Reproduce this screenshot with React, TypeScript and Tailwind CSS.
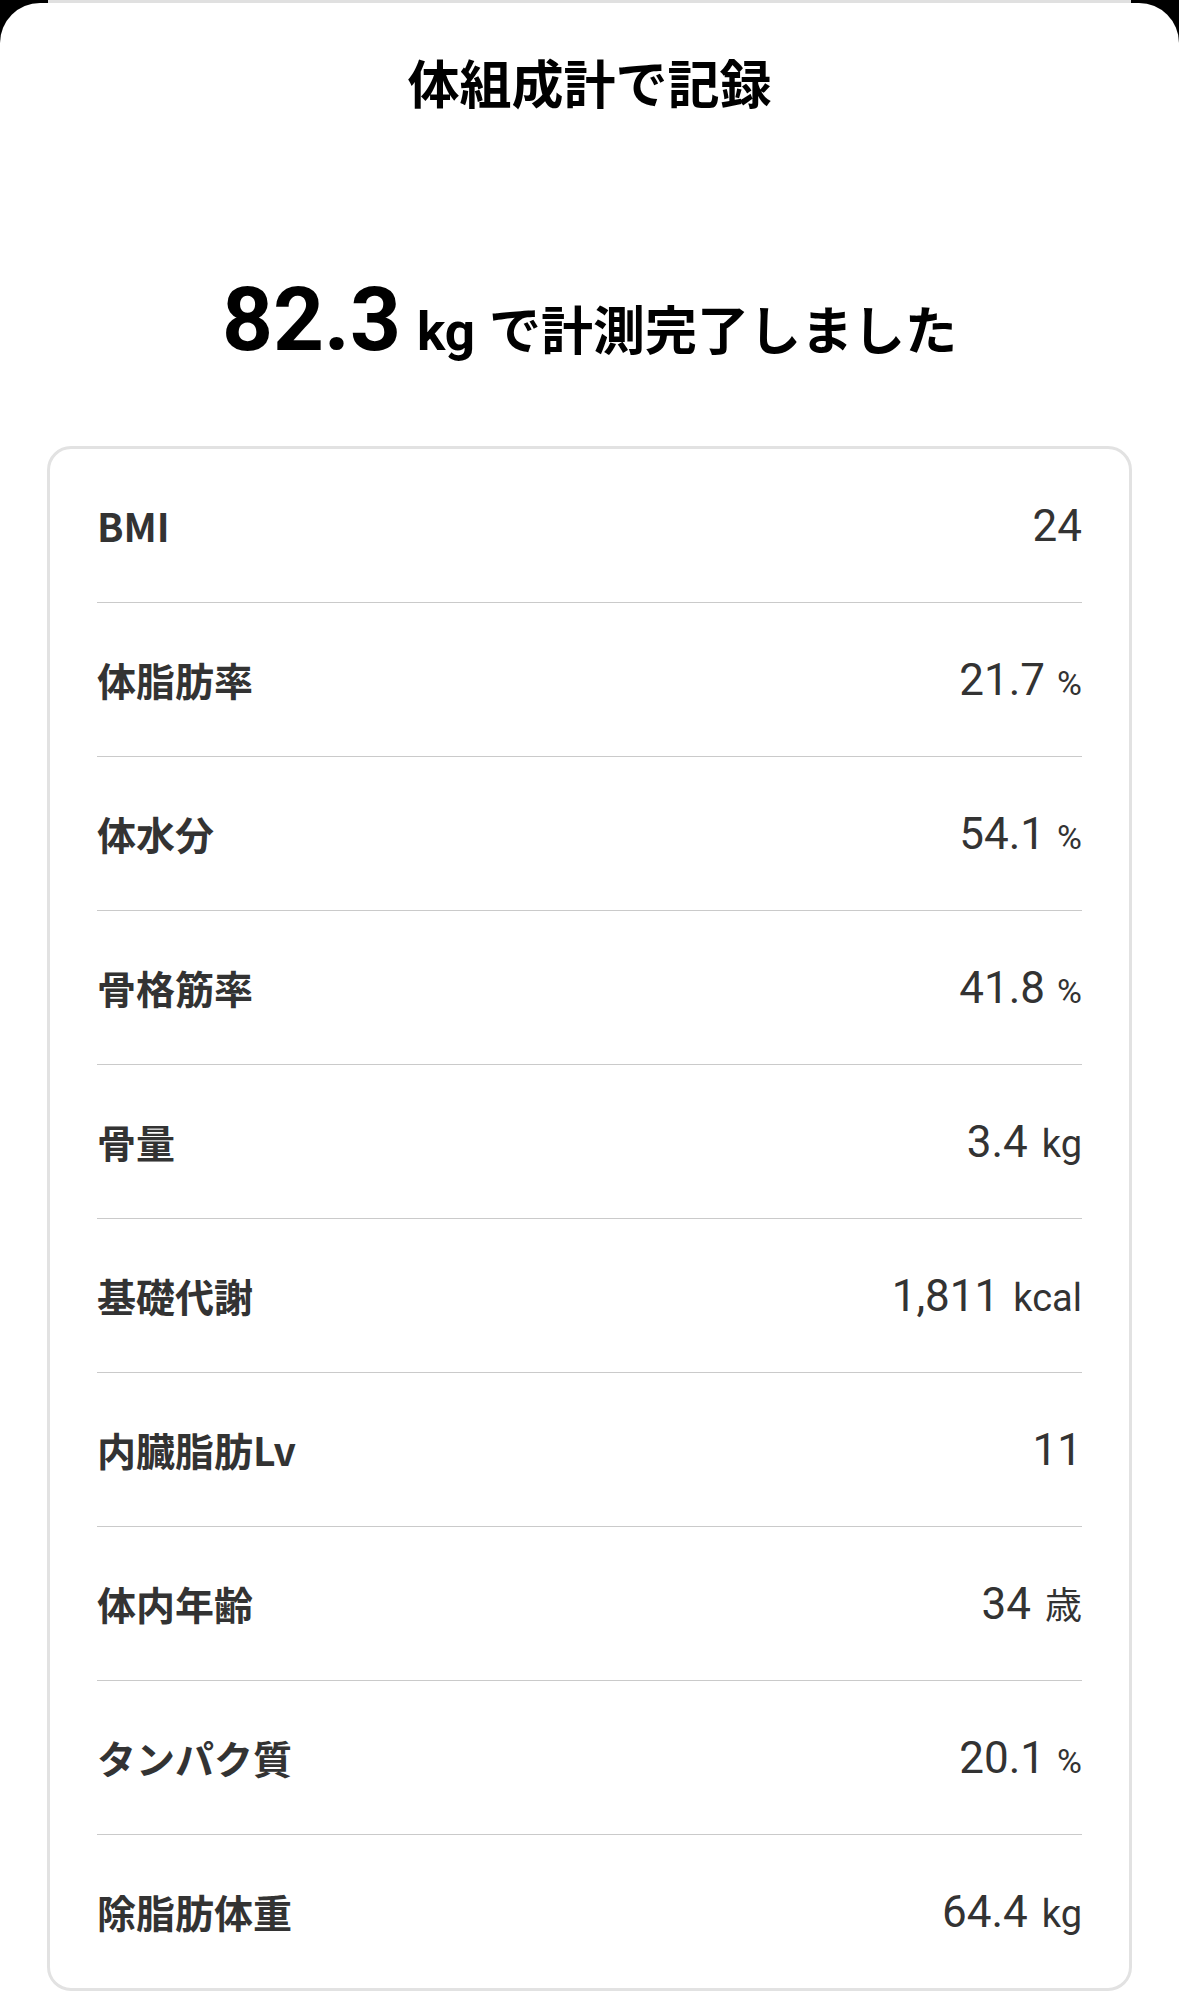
const rows: { label: string; value: string; unit?: string; unitKind?: "pct" | "latin" | "cjk" }[] = [
  { label: "BMI", value: "24" },
  { label: "体脂肪率", value: "21.7", unit: "%", unitKind: "pct" },
  { label: "体水分", value: "54.1", unit: "%", unitKind: "pct" },
  { label: "骨格筋率", value: "41.8", unit: "%", unitKind: "pct" },
  { label: "骨量", value: "3.4", unit: "kg", unitKind: "latin" },
  { label: "基礎代謝", value: "1,811", unit: "kcal", unitKind: "latin" },
  { label: "内臓脂肪Lv", value: "11" },
  { label: "体内年齢", value: "34", unit: "歳", unitKind: "cjk" },
  { label: "タンパク質", value: "20.1", unit: "%", unitKind: "pct" },
  { label: "除脂肪体重", value: "64.4", unit: "kg", unitKind: "latin" },
];

function Unit({ unit, kind }: { unit: string; kind?: string }) {
  if (kind === "pct") {
    return <span className="ml-[12px] text-[34px]">{unit}</span>;
  }
  if (kind === "cjk") {
    return (
      <span className="ml-[14px] text-[37px] font-['Noto_Sans_CJK_JP',sans-serif]">
        {unit}
      </span>
    );
  }
  return <span className="ml-[14px] text-[38px]">{unit}</span>;
}

export default function App() {
  return (
    <div className="min-h-screen w-[1179px] bg-black">
      <div className="mx-[48px] h-[3px] bg-[#e0e0e0]" />
      <div className="min-h-[2010px] rounded-t-[40px] bg-white font-['Noto_Sans_CJK_JP',sans-serif]">
        <h1 className="pt-[42px] text-center text-[52px] font-bold leading-[73px] text-black">
          体組成計で記録
        </h1>

        <div className="mt-[157px] flex h-[100px] items-baseline justify-center text-black">
          <span className="font-['Roboto',sans-serif] text-[89px] font-bold leading-none">82.3</span>
          <span className="ml-[16px] font-['Roboto',sans-serif] text-[53px] font-bold leading-none">kg</span>
          <span className="ml-[14px] text-[52px] font-bold leading-none">で計測完了しました</span>
        </div>

        <div className="mx-[47px] mt-[71px] rounded-[24px] border-[3px] border-[#e2e2e2] px-[47px]">
          {rows.map((r, i) => (
            <div
              key={r.label}
              className={`flex items-center justify-between ${i > 0 ? "h-[154px] border-t border-[#cacaca]" : "h-[153px]"}`}
            >
              <span className="text-[39px] font-bold text-[#333333]">{r.label}</span>
              <span className="flex items-baseline font-['Roboto',sans-serif] text-[44px] text-[#333333]">
                {r.value}
                {r.unit && <Unit unit={r.unit} kind={r.unitKind} />}
              </span>
            </div>
          ))}
        </div>
      </div>
    </div>
  );
}
